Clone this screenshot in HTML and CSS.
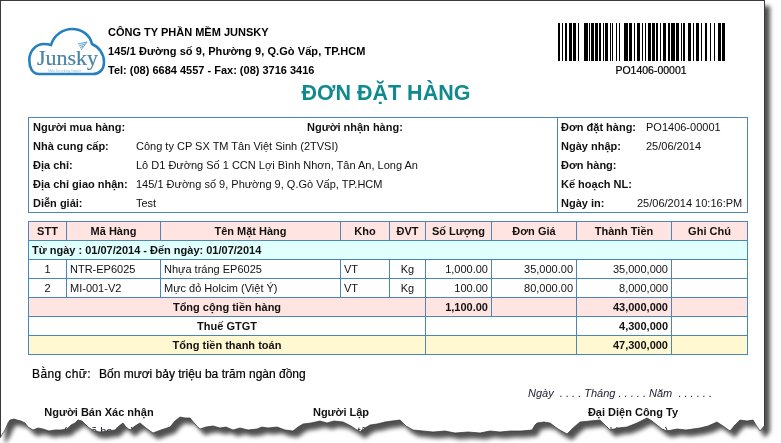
FILE: index.html
```html
<!DOCTYPE html>
<html lang="vi">
<head>
<meta charset="utf-8">
<title>Đơn đặt hàng</title>
<link rel="stylesheet" href="styles.css">
</head>
<body>
<div class="stage">
  <div class="shadow-wrap">
    <div class="sheet">
      <header class="head">
        <svg class="logo" viewBox="0 0 78 50" width="78" height="50">
          <path class="cloud" d="M11 47C4 47 1.300 40 1.300 33C1.300 24 8 17 16 17Q20 17 23 18C26 8 35 2 44 2C54 2 62 8 64 17C71 20 76 27 76 35C76 43 71 47 65 47Z"/>
          <path class="wifi" d="M50 17L59 15L53 23M51 19L57 17M52 21L55 19"/>
          <text class="logo-name" x="9" y="38">Junsky</text>
          <text class="logo-tag" x="20" y="45">Make Everything Simpler</text>
        </svg>
        <div class="company">
          <div>CÔNG TY PHẦN MỀM JUNSKY</div>
          <div class="company-addr">145/1 Đường số 9, Phường 9, Q.Gò Vấp, TP.HCM</div>
          <div>Tel: (08) 6684 4557 - Fax: (08) 3716 3416</div>
        </div>
        <div class="barcode">
          <svg class="bars" viewBox="0 0 168 38" width="168" height="38">
            <path d="M0 0h2v38h-2zM4 0h1v38h-1zM7 0h2v38h-2zM11 0h3v38h-3zM15 0h3v38h-3zM20 0h1v38h-1zM26 0h4v38h-4zM31 0h1v38h-1zM33 0h3v38h-3zM37 0h3v38h-3zM41 0h2v38h-2zM45 0h1v38h-1zM47 0h3v38h-3zM52 0h1v38h-1zM54 0h1v38h-1zM58 0h1v38h-1zM61 0h1v38h-1zM66 0h4v38h-4zM71 0h3v38h-3zM76 0h1v38h-1zM79 0h3v38h-3zM84 0h1v38h-1zM87 0h1v38h-1zM90 0h3v38h-3zM94 0h3v38h-3zM98 0h2v38h-2zM102 0h1v38h-1zM105 0h3v38h-3zM110 0h2v38h-2zM113 0h4v38h-4zM118 0h3v38h-3zM123 0h1v38h-1zM125 0h2v38h-2zM130 0h3v38h-3zM135 0h1v38h-1zM138 0h3v38h-3zM143 0h1v38h-1zM147 0h2v38h-2zM152 0h1v38h-1zM156 0h1v38h-1zM160 0h3v38h-3zM164 0h3v38h-3z"/>
          </svg>
          <div class="barcode-text">PO1406-00001</div>
        </div>
      </header>

      <h1 class="title">ĐƠN ĐẶT HÀNG</h1>

      <section class="info">
        <div class="info-main">
          <div class="info-row"><b class="lbl-buyer">Người mua hàng:</b><b>Người nhận hàng:</b></div>
          <div class="info-row"><b class="lbl">Nhà cung cấp:</b><span>Công ty CP SX TM Tân Việt Sinh (2TVSI)</span></div>
          <div class="info-row"><b class="lbl">Địa chỉ:</b><span>Lô D1 Đường Số 1 CCN Lợi Bình Nhơn, Tân An, Long An</span></div>
          <div class="info-row"><b class="lbl">Địa chỉ giao nhận:</b><span>145/1 Đường số 9, Phường 9, Q.Gò Vấp, TP.HCM</span></div>
          <div class="info-row"><b class="lbl">Diễn giải:</b><span>Test</span></div>
        </div>
        <div class="info-side">
          <div class="info-row"><b class="lbl-s">Đơn đặt hàng:</b><span>PO1406-00001</span></div>
          <div class="info-row"><b class="lbl-s">Ngày nhập:</b><span>25/06/2014</span></div>
          <div class="info-row"><b>Đơn hàng:</b></div>
          <div class="info-row"><b>Kế hoạch NL:</b></div>
          <div class="info-row"><b class="lbl-p">Ngày in:</b><span>25/06/2014 10:16:PM</span></div>
        </div>
      </section>

      <table class="items">
        <colgroup>
          <col class="c-stt"><col class="c-code"><col class="c-name"><col class="c-wh"><col class="c-unit"><col class="c-qty"><col class="c-price"><col class="c-amt"><col class="c-note">
        </colgroup>
        <thead>
          <tr class="pink"><th>STT</th><th>Mã Hàng</th><th>Tên Mặt Hàng</th><th>Kho</th><th>ĐVT</th><th>Số Lượng</th><th>Đơn Giá</th><th>Thành Tiền</th><th>Ghi Chú</th></tr>
        </thead>
        <tbody>
          <tr class="cyan"><td colspan="9" class="group">Từ ngày : 01/07/2014 - Đến ngày: 01/07/2014</td></tr>
          <tr><td class="ctr">1</td><td>NTR-EP6025</td><td>Nhựa tráng EP6025</td><td>VT</td><td class="ctr">Kg</td><td class="num">1,000.00</td><td class="num">35,000.00</td><td class="num">35,000,000</td><td></td></tr>
          <tr><td class="ctr">2</td><td>MI-001-V2</td><td>Mực đỏ Holcim (Việt Ý)</td><td>VT</td><td class="ctr">Kg</td><td class="num">100.00</td><td class="num">80,000.00</td><td class="num">8,000,000</td><td></td></tr>
          <tr class="pink sum"><td colspan="5" class="ctr">Tổng cộng tiền hàng</td><td class="num">1,100.00</td><td></td><td class="num">43,000,000</td><td></td></tr>
          <tr class="sum"><td colspan="5" class="ctr">Thuế GTGT</td><td colspan="2"></td><td class="num">4,300,000</td><td></td></tr>
          <tr class="cream sum"><td colspan="5" class="ctr">Tổng tiền thanh toán</td><td colspan="2"></td><td class="num">47,300,000</td><td></td></tr>
        </tbody>
      </table>

      <p class="words"><span class="words-lbl">Bằng chữ:</span><span>Bốn mươi bảy triệu ba trăm ngàn đồng</span></p>
      <p class="date">Ngày &nbsp;. . . . Tháng . . . . . Năm &nbsp;. . . . . .</p>

      <div class="signs">
        <div class="sign s1"><b>Người Bán Xác nhận</b><span class="note">(Ghi rõ họ tên)</span></div>
        <div class="sign s2"><b>Người Lập</b><span class="note">(Ghi rõ họ tên)</span></div>
        <div class="sign s3"><b>Đại Diện Công Ty</b><span class="note">(Ghi rõ họ tên)</span></div>
      </div>
    </div>
    <svg class="edge-svg" viewBox="0 0 781 443" width="781" height="443">
      <path class="edge" d="M0 438L3 433L5 430L8 423L10 420L14 419L17 420L21 421L25 423L28 427L33 430L38 428L43 429L49 431L55 430L61 430L67 429L71 425L75 423L78 420L82 421L85 424L88 427L94 431L100 432L107 431L115 430L119 426L123 423L126 427L130 430L135 426L140 423L146 428L153 433L161 430L170 427L175 421L180 417L185 418L190 418L195 424L200 429L206 427L213 426L220 428L226 427L233 430L240 428L248 430L257 429L262 427L268 428L277 427L285 430L293 431L298 427L303 424L311 423L320 421L327 423L334 421L343 422L351 426L360 432L365 428L370 425L377 424L385 422L392 421L400 420L406 426L413 430L423 431L433 432L445 431L455 433L468 432L480 433L490 431L500 432L510 431L521 431L532 430L535 425L537 423L544 422L550 423L558 429L567 434L573 428L580 422L590 421L600 420L605 425L610 430L618 428L627 427L637 423L647 418L652 421L657 425L662 429L667 431L677 429L686 430L700 428L708 426L717 422L723 426L730 431L735 425L740 420L747 421L753 420L756 425L760 431L765 425"/>
    </svg>
  </div>
</div>
</body>
</html>
```
FILE: styles.css
```css
* { box-sizing: border-box; }
html, body { margin: 0; padding: 0; background: #fff; }
body { font-family: "Liberation Sans", Arial, sans-serif; font-size: 11px; color: #111; }

.stage { position: relative; width: 781px; height: 443px; overflow: hidden; background: #fff; }
.shadow-wrap { position: relative; width: 781px; height: 443px; filter: drop-shadow(5px 6px 2px #505050); }
.sheet {
  width: 765px; height: 443px; background: #fff; overflow: hidden;
  border: 1px solid #3a3a3a; border-bottom: 0; padding-left: 27px;
  clip-path: polygon(0 0, 765px 0, 765px 425px, 760px 431px, 756px 425px, 753px 420px, 747px 421px, 740px 420px, 735px 425px, 730px 431px, 723px 426px, 717px 422px, 708px 426px, 700px 428px, 686px 430px, 677px 429px, 667px 431px, 662px 429px, 657px 425px, 652px 421px, 647px 418px, 637px 423px, 627px 427px, 618px 428px, 610px 430px, 605px 425px, 600px 420px, 590px 421px, 580px 422px, 573px 428px, 567px 434px, 558px 429px, 550px 423px, 544px 422px, 537px 423px, 535px 425px, 532px 430px, 521px 431px, 510px 431px, 500px 432px, 490px 431px, 480px 433px, 468px 432px, 455px 433px, 445px 431px, 433px 432px, 423px 431px, 413px 430px, 406px 426px, 400px 420px, 392px 421px, 385px 422px, 377px 424px, 370px 425px, 365px 428px, 360px 432px, 351px 426px, 343px 422px, 334px 421px, 327px 423px, 320px 421px, 311px 423px, 303px 424px, 298px 427px, 293px 431px, 285px 430px, 277px 427px, 268px 428px, 262px 427px, 257px 429px, 248px 430px, 240px 428px, 233px 430px, 226px 427px, 220px 428px, 213px 426px, 206px 427px, 200px 429px, 195px 424px, 190px 418px, 185px 418px, 180px 417px, 175px 421px, 170px 427px, 161px 430px, 153px 433px, 146px 428px, 140px 423px, 135px 426px, 130px 430px, 126px 427px, 123px 423px, 119px 426px, 115px 430px, 107px 431px, 100px 432px, 94px 431px, 88px 427px, 85px 424px, 82px 421px, 78px 420px, 75px 423px, 71px 425px, 67px 429px, 61px 430px, 55px 430px, 49px 431px, 43px 429px, 38px 428px, 33px 430px, 28px 427px, 25px 423px, 21px 421px, 17px 420px, 14px 419px, 10px 420px, 8px 423px, 5px 430px, 3px 433px, 0 438px);
}
.edge-svg { position: absolute; left: 0; top: 0; pointer-events: none; }
.edge { fill: none; stroke: #333; stroke-width: .7; }

.head { display: flex; height: 76px; padding-top: 22px; }
.logo { flex: none; margin: 4px 2px 0 0; }
.cloud { fill: #fff; stroke: #2480c0; stroke-width: 2.600; }
.wifi { fill: none; stroke: #5da0cc; stroke-width: 1; }
.logo-name { font-family: "Liberation Serif", serif; font-size: 22px; fill: #4a82a6; stroke: #4a82a6; stroke-width: .2; }
.logo-tag { font-family: "Liberation Serif", serif; font-size: 3.200px; fill: #8fb4cc; }
.company { width: 450px; font-weight: 700; line-height: 19px; color: #000; }
.company-addr { letter-spacing: .07px; }
.barcode { width: 168px; display: flex; flex-direction: column; align-items: center; }
.bars { display: block; fill: #000; }
.barcode-text { font-size: 10.500px; line-height: 11px; margin-top: 4px; padding-left: 18px; color: #000; -webkit-text-stroke: .2px #000; }

.title { margin: 0; width: 716px; text-align: center; font-size: 21.500px; line-height: 24px; height: 40px; padding-top: 4px; color: #0f8a8e; font-weight: 700; }

.info { display: flex; width: 720px; height: 96px; border: 1px solid #4a86b8; }
.info-main { width: 529px; border-right: 1px solid #4a86b8; padding-left: 4px; }
.info-side { flex: 1; padding-left: 3px; }
.info-row { display: flex; height: 19px; line-height: 19px; white-space: nowrap; }
.info-row b { font-weight: 700; }
.lbl { width: 103px; flex: none; }
.lbl-buyer { width: 274px; flex: none; }
.lbl-s { width: 85px; flex: none; }
.lbl-p { width: 76px; flex: none; }

.items { border-collapse: collapse; table-layout: fixed; width: 720px; margin-top: 8px; }
.items th, .items td { border: 1px solid #4a86b8; height: 19px; padding: 0 3px; line-height: 17px; white-space: nowrap; overflow: hidden; }
.items th { font-weight: 700; text-align: center; }
.c-stt { width: 38px; } .c-code { width: 94px; } .c-name { width: 180px; } .c-wh { width: 49px; } .c-unit { width: 36px; }
.c-qty { width: 66px; } .c-price { width: 85px; } .c-amt { width: 95px; } .c-note { width: 76px; }
.pink { background: #ffe4e1; }
.cyan { background: #e0ffff; }
.cream { background: #fff8d0; }
.group { font-weight: 700; }
.sum td { font-weight: 700; }
.ctr { text-align: center; }
.num { text-align: right; }

.words { margin: 0; padding: 12px 0 0 4px; font-size: 12px; line-height: 14px; color: #000; -webkit-text-stroke: .2px #000; }
.words-lbl { display: inline-block; width: 67px; letter-spacing: .4px; }
.date { margin: 0 0 0 500px; padding-top: 5px; font-style: italic; line-height: 14px; color: #223; }

.signs { display: flex; margin-top: 2px; }
.sign { display: flex; flex-direction: column; align-items: center; line-height: 20px; white-space: nowrap; }
.sign b { font-weight: 700; }
.note { color: #223; line-height: 19px; }
.s1 { width: 142px; }
.s2 { width: 100px; margin-left: 121px; }
.s3 { width: 120px; margin-left: 182px; }
```
